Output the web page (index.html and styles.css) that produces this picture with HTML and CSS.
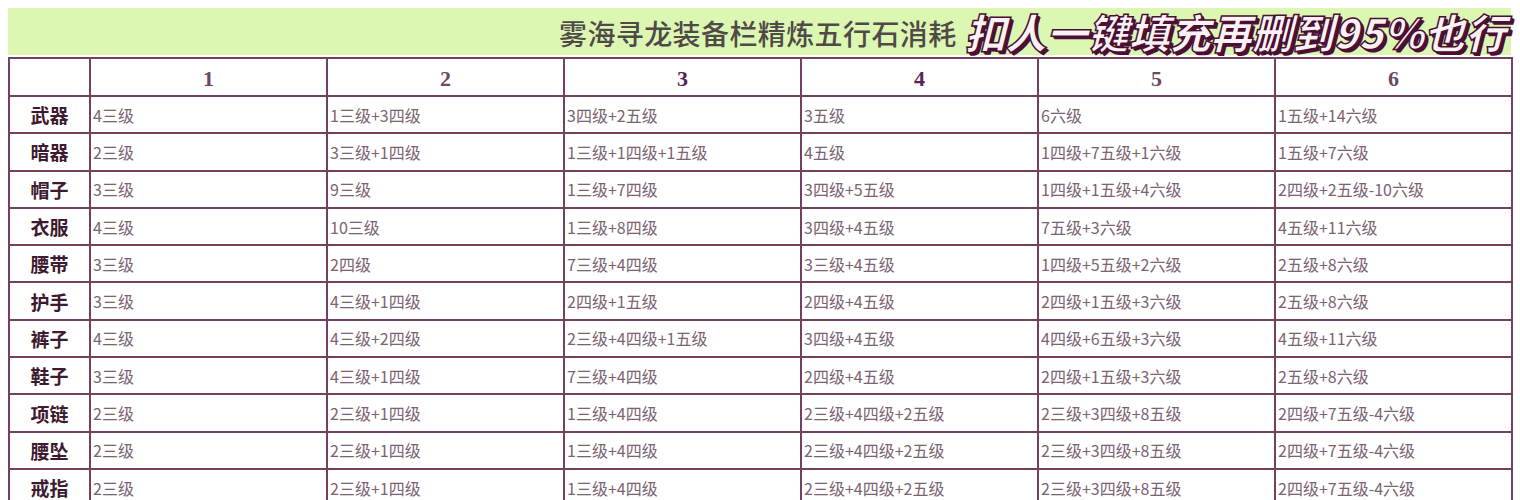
FILE: index.html
```html
<!DOCTYPE html>
<html lang="zh-CN">
<head>
<meta charset="utf-8">
<title>雾海寻龙装备栏精炼五行石消耗</title>
<link rel="stylesheet" href="styles.css">
</head>
<body>
<div class="sheet">
  <div class="banner">
    <span class="title">雾海寻龙装备栏精炼五行石消耗</span>
    <span class="sticker">扣人一键填充再删到95%也行</span>
  </div>
  <table class="grid">
    <colgroup>
      <col class="c-label"><col class="c-lvl"><col class="c-lvl"><col class="c-lvl"><col class="c-lvl"><col class="c-lvl"><col class="c-lvl">
    </colgroup>
    <thead>
      <tr class="head"><th></th><th>1</th><th>2</th><th class="dark">3</th><th class="dark">4</th><th>5</th><th>6</th></tr>
    </thead>
    <tbody>
      <tr><th>武器</th><td>4三级</td><td>1三级+3四级</td><td>3四级+2五级</td><td>3五级</td><td>6六级</td><td>1五级+14六级</td></tr>
      <tr><th>暗器</th><td>2三级</td><td>3三级+1四级</td><td>1三级+1四级+1五级</td><td>4五级</td><td>1四级+7五级+1六级</td><td>1五级+7六级</td></tr>
      <tr><th>帽子</th><td>3三级</td><td>9三级</td><td>1三级+7四级</td><td>3四级+5五级</td><td>1四级+1五级+4六级</td><td>2四级+2五级-10六级</td></tr>
      <tr><th>衣服</th><td>4三级</td><td>10三级</td><td>1三级+8四级</td><td>3四级+4五级</td><td>7五级+3六级</td><td>4五级+11六级</td></tr>
      <tr><th>腰带</th><td>3三级</td><td>2四级</td><td>7三级+4四级</td><td>3三级+4五级</td><td>1四级+5五级+2六级</td><td>2五级+8六级</td></tr>
      <tr><th>护手</th><td>3三级</td><td>4三级+1四级</td><td>2四级+1五级</td><td>2四级+4五级</td><td>2四级+1五级+3六级</td><td>2五级+8六级</td></tr>
      <tr><th>裤子</th><td>4三级</td><td>4三级+2四级</td><td>2三级+4四级+1五级</td><td>3四级+4五级</td><td>4四级+6五级+3六级</td><td>4五级+11六级</td></tr>
      <tr><th>鞋子</th><td>3三级</td><td>4三级+1四级</td><td>7三级+4四级</td><td>2四级+4五级</td><td>2四级+1五级+3六级</td><td>2五级+8六级</td></tr>
      <tr><th>项链</th><td>2三级</td><td>2三级+1四级</td><td>1三级+4四级</td><td>2三级+4四级+2五级</td><td>2三级+3四级+8五级</td><td>2四级+7五级-4六级</td></tr>
      <tr><th>腰坠</th><td>2三级</td><td>2三级+1四级</td><td>1三级+4四级</td><td>2三级+4四级+2五级</td><td>2三级+3四级+8五级</td><td>2四级+7五级-4六级</td></tr>
      <tr><th>戒指</th><td>2三级</td><td>2三级+1四级</td><td>1三级+4四级</td><td>2三级+4四级+2五级</td><td>2三级+3四级+8五级</td><td>2四级+7五级-4六级</td></tr>
    </tbody>
  </table>
</div>
</body>
</html>
```

FILE: styles.css
```css
html, body {
  margin: 0;
  padding: 0;
  background: #ffffff;
}
body {
  font-family: "Noto Sans CJK SC", "Noto Sans", sans-serif;
  overflow: hidden;
}
.sheet {
  padding: 8px 0 0 8px;
  width: 1503px;
}
.banner {
  height: 47px;
  background: #dcf7b2;
  display: flex;
  align-items: center;
  justify-content: flex-end;
  gap: 8px;
  margin-bottom: 2px;
}
.title {
  font-size: 28px;
  font-weight: 500;
  color: #4f4a48;
  letter-spacing: 0.4px;
  padding-top: 2px;
}
.sticker {
  font-size: 41px;
  font-weight: 900;
  font-style: italic;
  color: #fbf2f6;
  letter-spacing: 0;
  -webkit-text-stroke: 1.5px #4a0f33;
  text-shadow: 2px 2px 0 #4a0f33, 3px 3px 0 #4a0f33;
  line-height: 1;
  white-space: nowrap;
  margin-right: 5px;
}
.grid {
  border-collapse: collapse;
  table-layout: fixed;
  width: 1503px;
}
.c-label { width: 81px; }
.c-lvl { width: 237px; }
.grid th, .grid td {
  border: 2px solid #74405f;
  padding: 0;
}
.grid tr.head th {
  height: 33px;
  padding-top: 3px;
  font-family: "Liberation Serif", "DejaVu Serif", serif;
  font-size: 22px;
  line-height: 26px;
  font-weight: bold;
  color: #6a4a5c;
  text-align: center;
  vertical-align: middle;
}
.grid tr.head th.dark {
  color: #5a2450;
}
.grid tbody th {
  height: 35.3px;
  font-size: 19px;
  font-weight: 700;
  color: #3d1a2f;
  text-align: center;
  vertical-align: middle;
}
.grid tbody td {
  height: 35.3px;
  font-size: 16px;
  font-weight: 400;
  color: #7b6373;
  padding-left: 2px;
  text-align: left;
  vertical-align: middle;
  white-space: nowrap;
}
```
